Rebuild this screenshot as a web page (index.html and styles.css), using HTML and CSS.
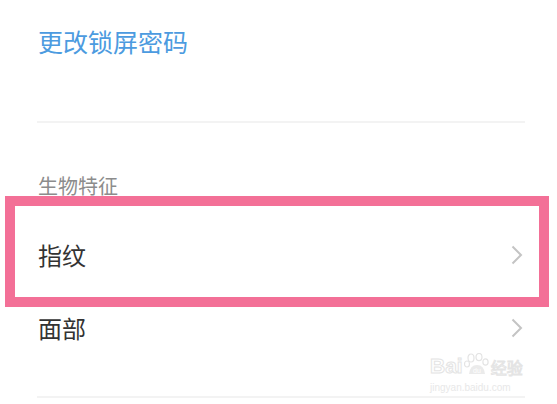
FILE: index.html
```html
<!DOCTYPE html>
<html lang="zh">
<head>
<meta charset="utf-8">
<link rel="stylesheet" href="styles.css">
</head>
<body>
<div class="page">
  <div class="top">
    <div class="link">更改锁屏密码</div>
  </div>
  <div class="divider"></div>
  <div class="header">生物特征</div>
  <div class="row highlighted">
    <span class="label">指纹</span>
    <svg class="chev" width="12" height="20" viewBox="0 0 12 20"><polyline points="1.5,1.5 10,10 1.5,18.5" fill="none" stroke="#c4c4c4" stroke-width="2"/></svg>
  </div>
  <div class="row">
    <span class="label">面部</span>
    <svg class="chev" width="12" height="20" viewBox="0 0 12 20"><polyline points="1.5,1.5 10,10 1.5,18.5" fill="none" stroke="#c4c4c4" stroke-width="2"/></svg>
  </div>
  <div class="divider bottom"></div>
  <div class="watermark">
    <div class="wm-top"><span class="wm-bai">Bai</span><svg class="paw" width="26" height="24" viewBox="0 0 26 24"><ellipse cx="7" cy="5" rx="3" ry="4" fill="none" stroke="#e4e4e4" stroke-width="1.2"/><ellipse cx="15" cy="4" rx="3" ry="3.6" fill="none" stroke="#e4e4e4" stroke-width="1.2"/><ellipse cx="21.5" cy="9" rx="2.6" ry="3.2" fill="none" stroke="#e4e4e4" stroke-width="1.2"/><ellipse cx="3" cy="11" rx="2.5" ry="3" fill="none" stroke="#e4e4e4" stroke-width="1.2"/><path d="M5 21 Q6 12 13 12 Q20 12 21 21 Z" fill="#ebebeb"/><text x="13" y="20" font-size="7" font-family="Liberation Sans, sans-serif" fill="#fff" text-anchor="middle">du</text></svg><span class="wm-jy">经验</span></div>
    <div class="wm-url">jingyan.baidu.com</div>
  </div>
</div>
</body>
</html>
```
FILE: styles.css
```css
html, body {
  margin: 0;
  padding: 0;
  background: #ffffff;
}
.page {
  position: relative;
  width: 557px;
  height: 404px;
  overflow: hidden;
  font-family: "Noto Sans CJK SC", "Noto Sans", sans-serif;
}
.top {
  height: 121px;
  padding-left: 38px;
  box-sizing: border-box;
  padding-top: 27px;
}
.link {
  font-size: 25px;
  line-height: 28px;
  color: #4c9be0;
}
.divider {
  height: 2px;
  margin: 0 32px 0 37px;
  background: #f3f3f3;
}
.header {
  padding-left: 38px;
  margin-top: 52px;
  font-size: 20px;
  line-height: 22px;
  color: #8c8c8c;
}
.row {
  position: relative;
  height: 73px;
  display: flex;
  align-items: center;
  justify-content: space-between;
  padding: 0 34px 0 38px;
}
.header + .row {
  margin-top: 21px;
}
.label {
  font-size: 24px;
  line-height: 28px;
  color: #333333;
}
.chev {
  display: block;
}
.highlighted::after {
  content: "";
  position: absolute;
  left: 5px;
  right: 8px;
  top: -22px;
  bottom: -16px;
  border: 10px solid #f37097;
}
.divider.bottom {
  margin-top: 32px;
}
.watermark {
  position: absolute;
  left: 430px;
  top: 343px;
  width: 100px;
  color: #e6e6e6;
  font-family: "Liberation Sans", sans-serif;
}
.wm-top {
  display: flex;
  align-items: flex-end;
  height: 34px;
}
.wm-bai {
  font-size: 21px;
  line-height: 22px;
  font-weight: bold;
  color: #fff;
  -webkit-text-stroke: 1px #e4e4e4;
}
.paw {
  display: block;
  margin: 0 1px;
}
.wm-jy {
  font-family: "Noto Sans CJK SC", sans-serif;
  font-size: 16px;
  line-height: 20px;
  color: #fff;
  -webkit-text-stroke: 1px #e4e4e4;
}
.wm-url {
  font-size: 10px;
  line-height: 14px;
  margin-top: 4px;
  color: #e8e8e8;
}
```
